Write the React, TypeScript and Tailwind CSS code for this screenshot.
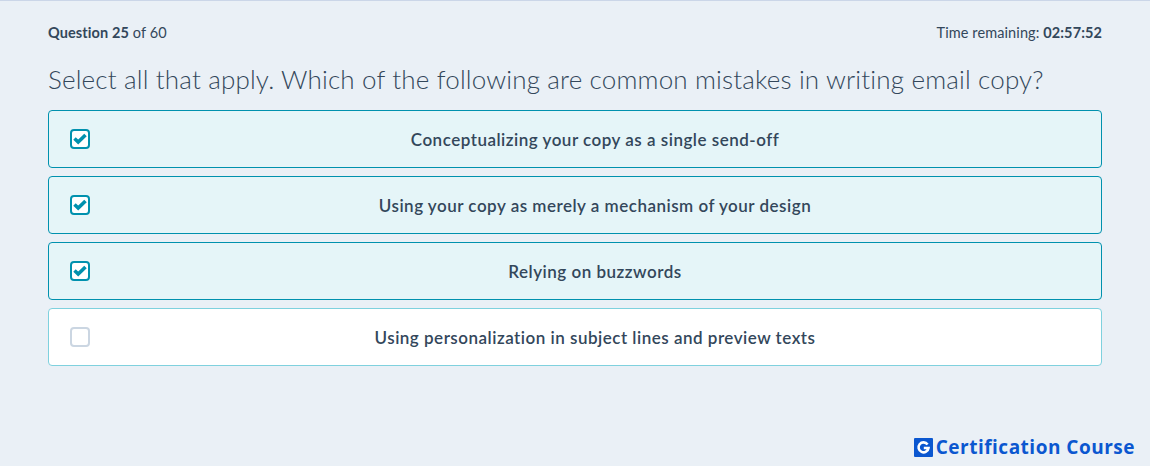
const options = [
  { label: 'Conceptualizing your copy as a single send-off', checked: true },
  { label: 'Using your copy as merely a mechanism of your design', checked: true },
  { label: 'Relying on buzzwords', checked: true },
  { label: 'Using personalization in subject lines and preview texts', checked: false },
];

function OptionCard({ label, checked }: { label: string; checked: boolean }) {
  return (
    <div
      className={
        'flex h-[58px] items-center rounded-[4px] border pl-[21px] pr-px ' +
        (checked ? 'border-[#0091ae] bg-[#e5f5f8]' : 'border-[#7fd1de] bg-white')
      }
    >
      <div
        className={
          'flex h-5 w-5 shrink-0 items-center justify-center rounded-[4px] border-2 bg-white ' +
          (checked ? 'border-[#0091ae]' : 'border-[#cbd6e2]')
        }
      >
        {checked && (
          <svg width="14" height="12" viewBox="0 0 14 12" aria-hidden="true">
            <path d="M1.5 5.5 L5.2 9 L12.5 2" fill="none" stroke="#0091ae" strokeWidth="3.6" />
          </svg>
        )}
      </div>
      <div className="flex-1 pt-px text-center text-[17px] font-semibold tracking-[0.5px] text-[#33475b]">{label}</div>
    </div>
  );
}

export default function App() {
  return (
    <div className="relative h-[466px] overflow-hidden border-t border-[#cbd6e8] bg-[#eaf0f6] px-12 font-['Lato',sans-serif] text-[#33475b]">
      <div className="flex h-[61px] items-center justify-between pt-[2px] text-[14.5px] tracking-[0.1px]">
        <div>
          <span className="font-bold">Question 25</span> of 60
        </div>
        <div>
          Time remaining: <span className="font-bold">02:57:52</span>
        </div>
      </div>
      <h1 className="mb-[14px] text-[26px] leading-[34px] font-light tracking-[0.16px]">
        Select all that apply. Which of the following are common mistakes in writing email copy?
      </h1>
      <div className="flex flex-col gap-2">
        {options.map((o) => (
          <OptionCard key={o.label} label={o.label} checked={o.checked} />
        ))}
      </div>
      <div className="absolute right-[15px] bottom-[8px] flex items-center gap-[3px] font-['Open_Sans',sans-serif] text-[19px] leading-[22px] font-bold tracking-[0.5px] text-[#0b57d0]">
        <svg width="19" height="19" viewBox="0 0 19 19" aria-hidden="true">
          <rect width="19" height="19" rx="1" fill="#0b57d0" />
          <path d="M13.6 6.4A5 5 0 1 0 14.5 10H9.8" fill="none" stroke="#fff" strokeWidth="2.6" />
        </svg>
        <span>Certification Course</span>
      </div>
    </div>
  );
}
